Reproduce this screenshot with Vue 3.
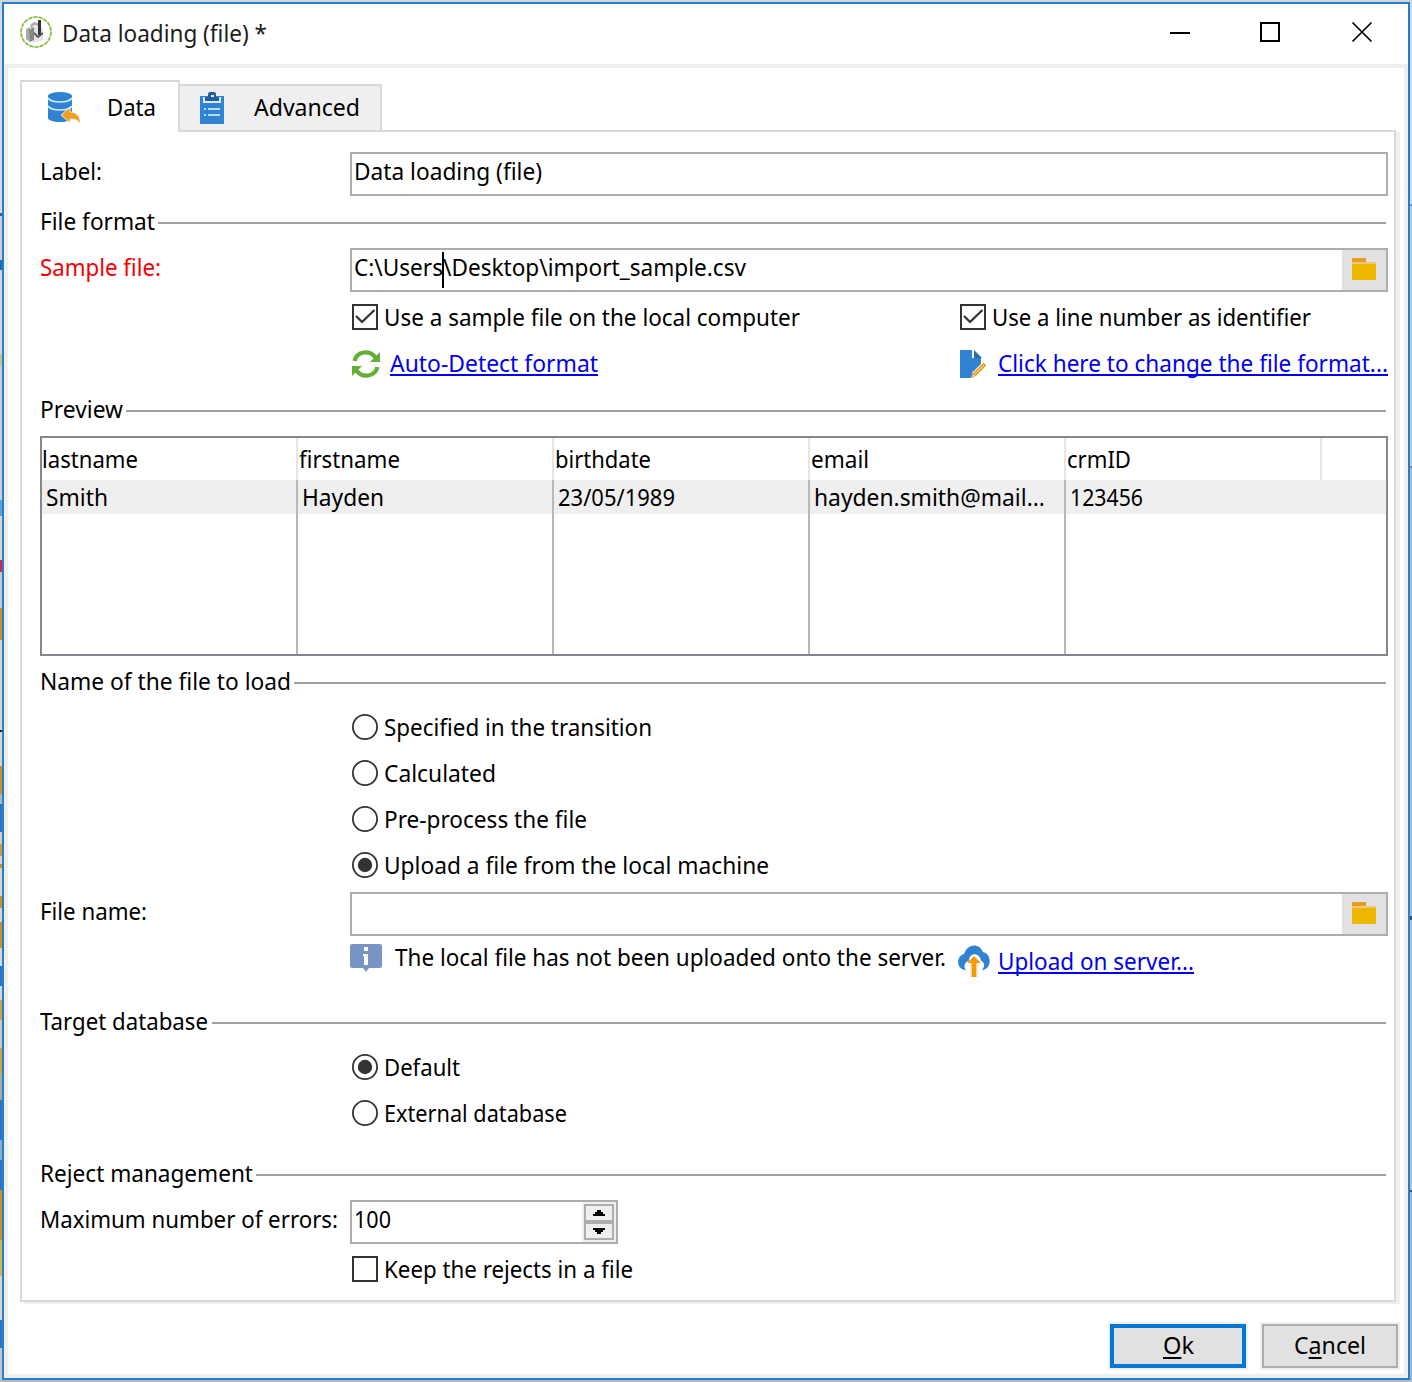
<script setup>
// Squeezes a run of text to a given advance width while keeping it in flow.
const vFit = {
  mounted(el, { value }) {
    const natural = el.getBoundingClientRect().width
    el.style.transform = `scaleX(${value / natural})`
    el.style.marginRight = `${value - natural}px`
  },
}

const columns = [
  { name: 'lastname', nameWidth: 96, value: 'Smith', valueWidth: 62 },
  { name: 'firstname', nameWidth: 101, value: 'Hayden', valueWidth: 82 },
  { name: 'birthdate', nameWidth: 96, value: '23/05/1989', valueWidth: 117 },
  { name: 'email', nameWidth: 58, value: 'hayden.smith@mail...', valueWidth: 231 },
  { name: 'crmID', nameWidth: 64, value: '123456', valueWidth: 73 },
]

const sources = [
  { text: 'Specified in the transition', width: 268, on: false },
  { text: 'Calculated', width: 112, on: false },
  { text: 'Pre-process the file', width: 203, on: false },
  { text: 'Upload a file from the local machine', width: 385, on: true },
]

const targets = [
  { text: 'Default', width: 76, on: true },
  { text: 'External database', width: 183, on: false },
]
</script>

<template>
  <div class="desktop">
    <div class="window">
      <header class="titlebar">
        <svg class="logo" width="32" height="32" viewBox="0 0 32 32">
          <circle cx="16" cy="16" r="15" fill="#fff" stroke="#dfeec8" stroke-width="2" />
          <circle cx="16" cy="16" r="15" fill="none" stroke="#8dbb3c" stroke-width="1.6" stroke-dasharray="4 1.2" />
          <path d="M13 10l10 2v12l-10 3z" fill="#e4e4e2" />
          <path d="M6 13l4-2v15l-4-3z" fill="#a9a9a6" />
          <path d="M9 14l5-3v13l-4 2z" fill="#868683" />
          <path d="M10 9l4-3 4 1v3l-4-1-3 4z" fill="#b0b0ad" />
          <path d="M18 4h3v15h-3z" fill="#353633" />
          <path d="M14 17l4 4 5-4" fill="none" stroke="#5a5a58" stroke-width="1.8" />
        </svg>
        <span v-fit="205" class="t title">Data loading (file) *</span>
        <svg class="controls" width="204" height="24" viewBox="0 0 204 24" fill="none" stroke="#000" stroke-width="2">
          <path d="M0 13h20" />
          <path d="M91 3h18v18h-18z" />
          <path d="M182.500 2.500l19 19M201.500 2.500l-19 19" stroke-width="1.7" />
        </svg>
      </header>

      <main class="body">
        <nav class="tabs">
          <div class="tab active">
            <svg width="34" height="34" viewBox="0 0 34 34">
              <path d="M1 5v22c0 2 5 4 12 4s12-2 12-4V5z" fill="#2f83d2" />
              <ellipse cx="13" cy="5" rx="12" ry="4" fill="#2f83d2" />
              <path d="M1 7c2 3 7 4 12 4s10-1 12-4M1 15c2 3 7 4 12 4s10-1 12-4" fill="none" stroke="#d9eafa" stroke-width="1.700" />
              <path d="M14 24l9-8v5c6 0 11 4 10 12-2-4-5-5-10-5v4z" fill="#f0a020" stroke="#fff" stroke-width=".8" />
            </svg>
            <span v-fit="49" class="t">Data</span>
          </div>
          <div class="tab">
            <svg width="24" height="32" viewBox="0 0 24 32">
              <path d="M0 4h24v28H0z" fill="#2f83d2" />
              <path d="M3 5h18v6H3z" fill="#dfeaf4" />
              <path d="M5 5h3V2q0-2 2-2h4q2 0 2 2v3h3v4H5z" fill="#225f9f" />
              <path d="M11 3h3v2h-3z" fill="#e8eef6" />
              <path d="M4 17h2M4 23h2M8 17h12M8 23h12" stroke="#b9dcf7" stroke-width="2" />
            </svg>
            <span v-fit="106" class="t">Advanced</span>
          </div>
        </nav>

        <section class="panel">
          <div class="row first">
            <label class="label"><span v-fit="62" class="t">Label:</span></label>
            <div class="field"><span v-fit="188" class="t">Data loading (file)</span></div>
          </div>

          <div class="row gap4 group"><span v-fit="115" class="t">File format</span><i class="rule"></i></div>

          <div class="row">
            <label class="label required"><span v-fit="121" class="t">Sample file:</span></label>
            <div class="field">
              <span v-fit="89" class="t">C:\Users</span><i class="caret"></i><span v-fit="303" class="t">\Desktop\import_sample.csv</span>
              <div class="browse">
                <svg width="24" height="22" viewBox="0 0 24 22"><path d="M0 0h14v4H0z" fill="#ec9a26" /><path d="M0 4h24v3H0z" fill="#ecca76" /><path d="M0 6h24v16H0z" fill="#edb700" /></svg>
              </div>
            </div>
          </div>

          <div class="row gap4 indent">
            <div class="half">
              <svg class="mark" width="26" height="26" viewBox="0 0 26 26" fill="none" stroke="#333" stroke-width="2"><path d="M1 1h24v24H1z" /><path d="M4 12l6 6L22.500 6" stroke-width="2.300" /></svg>
              <span v-fit="416" class="t">Use a sample file on the local computer</span>
            </div>
            <div class="half second">
              <svg class="mark" width="26" height="26" viewBox="0 0 26 26" fill="none" stroke="#333" stroke-width="2"><path d="M1 1h24v24H1z" /><path d="M4 12l6 6L22.500 6" stroke-width="2.300" /></svg>
              <span v-fit="319" class="t">Use a line number as identifier</span>
            </div>
          </div>

          <div class="row indent">
            <div class="half">
              <svg class="refresh" width="28" height="28" viewBox="0 0 28 28">
                <g fill="none" stroke="#62b038" stroke-width="4.200"><path d="M2.500 11C5 1 18-.5 23.500 7.500" /><path d="M25.500 17C23 27 10 28.500 4.500 20.500" /></g>
                <path d="M28 2v10H18z" fill="#62b038" /><path d="M0 26V16h10z" fill="#62b038" />
              </svg>
              <a class="link"><span v-fit="208" class="t">Auto-Detect format</span></a>
            </div>
            <div class="half second">
              <svg class="edit" width="26" height="28" viewBox="0 0 26 28">
                <path d="M0 0h12v8h9v7L11 28H0z" fill="#2f83d2" />
                <path d="M14 0l8 8h-8z" fill="#286ead" />
                <path d="M14 25L25 14" stroke="#fff" stroke-width="6" />
                <path d="M14 25L25 14" stroke="#f0a020" stroke-width="4" />
                <path d="M15 24l9-9" stroke="#fbe2b8" stroke-width=".9" />
                <path d="M11 28l1-4 3 3z" fill="#efb75a" />
              </svg>
              <a class="link"><span v-fit="390" class="t">Click here to change the file format...</span></a>
            </div>
          </div>

          <div class="row group"><span v-fit="83" class="t">Preview</span><i class="rule"></i></div>

          <div class="grid">
            <div v-for="c in columns" :key="c.name" class="col">
              <div class="head"><span v-fit="c.nameWidth" class="t">{{ c.name }}</span></div>
              <div class="cell"><span v-fit="c.valueWidth" class="t">{{ c.value }}</span></div>
              <div class="blank"></div>
            </div>
            <div class="col last"><div class="head"></div><div class="cell"></div></div>
          </div>

          <div class="row gap2 group"><span v-fit="251" class="t">Name of the file to load</span><i class="rule"></i></div>

          <div v-for="s in sources" :key="s.text" class="row indent">
            <svg class="mark" width="26" height="26" viewBox="0 0 26 26"><circle cx="13" cy="13" r="12.100" fill="#fff" stroke="#333" stroke-width="1.800" /><circle v-if="s.on" cx="13" cy="13" r="7.200" fill="#333" /></svg>
            <span v-fit="s.width" class="t">{{ s.text }}</span>
          </div>

          <div class="row">
            <label class="label"><span v-fit="107" class="t">File name:</span></label>
            <div class="field">
              <div class="browse">
                <svg width="24" height="22" viewBox="0 0 24 22"><path d="M0 0h14v4H0z" fill="#ec9a26" /><path d="M0 4h24v3H0z" fill="#ecca76" /><path d="M0 6h24v16H0z" fill="#edb700" /></svg>
              </div>
            </div>
          </div>

          <div class="row indent">
            <div class="half">
              <svg class="info" width="32" height="28" viewBox="0 0 32 28"><path d="M2 0h28q2 0 2 2v20q0 2-2 2H19l-3 4-3-4H2q-2 0-2-2V2q0-2 2-2z" fill="#7695c5" /><path d="M14 3h4v4h-4zM13 10h5v11h-4v-9h-1z" fill="#fff" /></svg>
              <span v-fit="551" class="t">The local file has not been uploaded onto the server.</span>
            </div>
            <div class="half second upload">
              <svg class="cloud" width="32" height="32" viewBox="0 0 32 32">
                <path d="M7 25C-2 24-2 11 6 9 9-1 21-3 25 7c9 2 9 16 0 18z" fill="#2f83d2" />
                <path d="M8 25c-3-3-1-9 3-9 0-9 11-9 12 0 4 1 4 6 1 9z" fill="#fff" />
                <path d="M16 32V15" stroke="#f4d6a4" stroke-width="7" />
                <path d="M16 32V14" stroke="#f09a0c" stroke-width="4" />
                <path d="M9 18l7-7 7 7z" fill="#f09a0c" />
              </svg>
              <a class="link"><span v-fit="196" class="t">Upload on server...</span></a>
            </div>
          </div>

          <div class="row gap18 group"><span v-fit="168" class="t">Target database</span><i class="rule wide"></i></div>

          <div v-for="s in targets" :key="s.text" class="row indent">
            <svg class="mark" width="26" height="26" viewBox="0 0 26 26"><circle cx="13" cy="13" r="12.100" fill="#fff" stroke="#333" stroke-width="1.800" /><circle v-if="s.on" cx="13" cy="13" r="7.200" fill="#333" /></svg>
            <span v-fit="s.width" class="t">{{ s.text }}</span>
          </div>

          <div class="row gap14 group"><span v-fit="213" class="t">Reject management</span><i class="rule"></i></div>

          <div class="row">
            <label class="label"><span v-fit="298" class="t">Maximum number of errors:</span></label>
            <div class="field number">
              <span v-fit="37" class="t">100</span>
              <div class="spinner">
                <b><svg width="12" height="6" viewBox="0 0 12 6"><path d="M0 6V4h2V2h2V0h4v2h2v2h2v2z" /></svg></b>
                <b><svg width="12" height="6" viewBox="0 0 12 6"><path d="M0 0v2h2v2h2v2h4V4h2V2h2V0z" /></svg></b>
              </div>
            </div>
          </div>

          <div class="row gap4 indent">
            <svg class="mark" width="26" height="26" viewBox="0 0 26 26" fill="none" stroke="#333" stroke-width="2"><path d="M1 1h24v24H1z" /></svg>
            <span v-fit="249" class="t">Keep the rejects in a file</span>
          </div>
        </section>

        <footer class="actions">
          <button class="btn primary"><span v-fit="31" class="t"><u>O</u>k</span></button>
          <button class="btn"><span v-fit="72" class="t">C<u>a</u>ncel</span></button>
        </footer>
      </main>
    </div>
  </div>
</template>

<style>
body {
  margin: 0;
}
</style>

<style scoped>
* {
  box-sizing: border-box;
}
.desktop {
  width: 1412px;
  height: 1382px;
  padding: 2px;
  overflow: hidden;
  font: 24px/32px 'Noto Sans', 'Open Sans', sans-serif;
  color: #000;
  background:
    linear-gradient(#d4d5dc, #d4d5dc) 0 0 / 100% 2px no-repeat,
    linear-gradient(#b3bac7, #b3bac7) 0 100% / 100% 2px no-repeat,
    linear-gradient(#d6d7da 204px, #8d94a0 204px 206px, #c3c8d2 206px 466px, #7d8793 466px 468px, #aebccd 468px 916px, #46505c 916px 920px, #b9c1cd 920px 1190px, #46505c 1190px 1192px, #a5b4c8 1192px) 100% 0 / 2px 100% no-repeat,
    linear-gradient(#d9dadf 213px, #35639e 213px 216px, #ced0d6 216px 260px, #2169b4 260px 270px, #d5d6db 270px 354px, #c8c58e 354px 366px, #ced0d6 366px 500px, #5ba0d4 500px 516px, #d5d6d8 516px 560px, #d62250 560px 572px, #c3cad4 572px 608px, #cf9022 608px 640px, #d5d6d8 640px 730px, #222 730px 732px, #d5d6d8 732px 766px, #cf9022 766px 794px, #aab7c8 794px 804px, #2976bd 804px 832px, #d1cdc0 832px 844px, #d09a36 844px 856px, #d5d6d8 856px 864px, #cf9022 864px 868px, #d5d6d8 868px 896px, #cf9022 896px 908px, #d5d6d8 908px 922px, #cf9022 922px 948px, #d5d6d8 948px 966px, #2976bd 966px 986px, #d5d6d8 986px 1000px, #d0a63c 1000px 1020px, #c8c9cc 1020px 1048px, #d0a63c 1048px 1074px, #a6a8ab 1074px 1100px, #2976bd 1100px 1140px, #8bacd0 1140px 1160px, #2976bd 1160px 1190px, #cf9022 1190px 1240px, #d0b848 1240px 1276px, #d5d6d8 1276px 1320px, #2976bd 1320px 1348px, #c1c6d0 1348px) 0 0 / 2px 100% no-repeat,
    #ccc;
}
.window {
  display: flex;
  flex-direction: column;
  height: 1378px;
  border: 2px solid #2580cc;
  background: #fff;
}
.t {
  display: inline-block;
  flex: none;
  white-space: pre;
  transform-origin: 0 50%;
}
svg {
  display: block;
  flex: none;
}
.titlebar {
  display: flex;
  align-items: center;
  height: 60px;
  padding: 0 34px 4px 16px;
}
.title {
  margin-left: 10px;
  padding-top: 2px;
  color: #1c1c1c;
}
.controls {
  margin-left: auto;
}
.body {
  flex: 1;
  display: flex;
  flex-direction: column;
  border: 4px solid #efefef;
  padding: 12px 4px 0 12px;
}
.tabs {
  display: flex;
  align-items: flex-end;
  height: 50px;
}
.tab {
  display: flex;
  align-items: center;
  width: 202px;
  height: 46px;
  padding-left: 20px;
  border: solid #d9d9d9;
  border-width: 2px 2px 0 0;
  background: #efefef;
}
.tab .t {
  margin: -2px 0 0 30px;
}
.tab.active {
  position: relative;
  z-index: 1;
  width: 160px;
  height: 52px;
  margin-bottom: -2px;
  padding: 2px 0 0 25px;
  border-left-width: 2px;
  background: #fff;
}
.tab.active .t {
  margin-left: 26px;
}
.panel {
  width: 1376px;
  height: 1172px;
  padding: 0 6px 0 18px;
  border: 2px solid #d9d9d9;
  box-shadow: 4px 2px #efefef;
}
.row {
  display: flex;
  align-items: center;
  height: 46px;
}
.first {
  margin-top: 16px;
}
.gap2 {
  margin-top: 2px;
}
.gap4 {
  margin-top: 4px;
}
.gap14 {
  margin-top: 14px;
}
.gap18 {
  margin-top: 18px;
}
.rule {
  flex: 1;
  height: 2px;
  margin: 3px 2px 0 3px;
  background: #a0a0a0;
}
.rule.wide {
  margin-left: 4px;
}
.label {
  display: flex;
  flex: none;
  width: 310px;
}
.required {
  color: #f50000;
}
.field {
  display: flex;
  width: 1038px;
  height: 44px;
  margin-top: 6px;
  padding: 1px 0 0 2px;
  border: 2px solid #abadb3;
  background: #fff;
}
.caret {
  position: relative;
  z-index: 1;
  width: 2px;
  height: 36px;
  margin: 1px -1px 0;
  background: #000;
}
.browse {
  width: 44px;
  height: 40px;
  margin: -1px 0 0 auto;
  padding: 8px 0 0 10px;
  background: #e1e1e1;
}
.indent {
  padding-left: 310px;
}
.half {
  display: flex;
  flex: none;
  align-items: center;
  width: 608px;
}
.half.second {
  width: 430px;
}
.mark {
  margin: 0 6px 0 2px;
}
.refresh {
  margin: 2px 10px 0 2px;
}
.edit {
  margin: 2px 12px 0 2px;
}
.info {
  margin: 2px 13px 0 0;
}
.cloud {
  margin-right: 8px;
}
.upload {
  margin-top: 8px;
}
.link {
  color: #0000f0;
}
.link .t {
  text-decoration: underline;
  text-decoration-thickness: 2px;
  text-underline-offset: 2px;
  text-decoration-skip-ink: none;
}
.grid {
  display: flex;
  height: 220px;
  margin-top: 4px;
  border: 2px solid #828790;
}
.col {
  display: flex;
  flex-direction: column;
  width: 256px;
}
.head,
.cell {
  display: flex;
  align-items: center;
}
.head {
  height: 42px;
  border-right: 2px solid #e5e5e5;
}
.col + .col .head {
  padding-left: 1px;
}
.cell {
  height: 34px;
  padding-left: 4px;
  border-right: 2px solid #b8b8b8;
  background: #efefef;
}
.blank {
  flex: 1;
  border-right: 2px solid #b8b8b8;
}
.col.last {
  width: 64px;
}
.last .head,
.last .cell,
.col:nth-last-child(2) .cell,
.col:nth-last-child(2) .blank {
  border-right: 0;
}
.number {
  width: 268px;
  border-color: #adadad;
}
.spinner {
  width: 34px;
  height: 40px;
  margin: -1px 0 0 auto;
  padding: 2px;
  background: #efefef;
}
.spinner b {
  display: flex;
  align-items: center;
  justify-content: center;
  width: 30px;
  height: 18px;
  border: 2px solid #adadad;
}
.actions {
  display: flex;
  gap: 16px;
  margin: 22px 2px 0 auto;
}
.btn {
  display: flex;
  justify-content: center;
  width: 136px;
  height: 44px;
  padding: 3px 0 0;
  border: 2px solid #adadad;
  background: #e1e1e1;
  box-shadow: 0 0 0 2px #efefef;
  font: inherit;
  color: #000;
}
.btn.primary {
  padding-top: 1px;
  border: 4px solid #0078d7;
}
.btn u {
  text-decoration-thickness: 2px;
  text-underline-offset: 3px;
}
</style>
